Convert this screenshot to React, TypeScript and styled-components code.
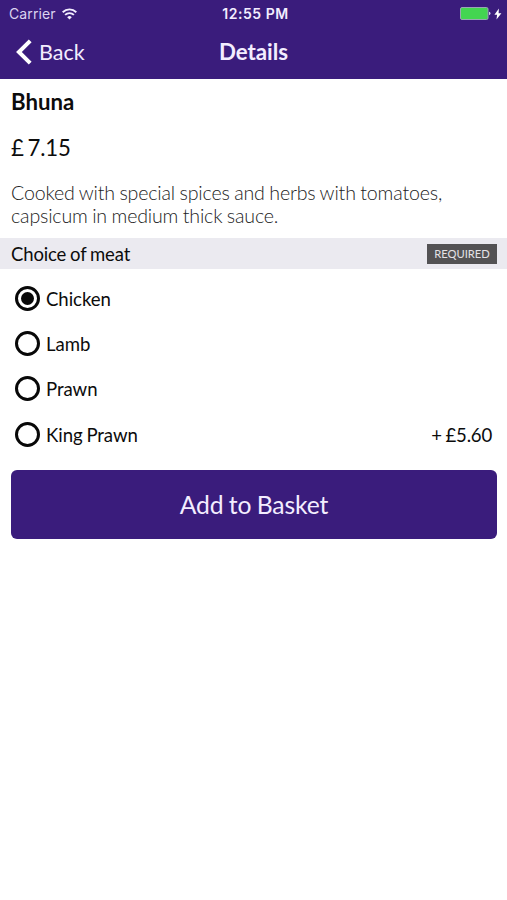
import React, { useState } from "react";
import styled, { createGlobalStyle } from "styled-components";

const purple = "#3a1c7c";

const GlobalStyle = createGlobalStyle`
  * { box-sizing: border-box; }
  body {
    margin: 0;
    background: #fff;
    color: #0c0c0c;
    font-family: Lato, sans-serif;
  }
`;

const Screen = styled.main`
  width: 100%;
  min-height: 900px;
  background: #fff;
`;

const Header = styled.header`
  height: 79px;
  background: ${purple};
  color: #f3edff;
`;

const StatusBar = styled.div`
  display: grid;
  grid-template-columns: 1fr auto 1fr;
  align-items: center;
  height: 27px;
  padding: 0 5px 0 9px;
  font-family: Inter, sans-serif;
  font-size: 14px;
  line-height: 27px;
`;

const Carrier = styled.div`
  display: flex;
  align-items: center;
  gap: 6px;
  color: #dcd3f0;
  letter-spacing: 0.1px;
`;

const Clock = styled.div`
  font-weight: 600;
  font-size: 14px;
  letter-spacing: 0.55px;
`;

const Power = styled.div`
  display: flex;
  align-items: center;
  justify-content: flex-end;
  gap: 3px;
`;

const NavBar = styled.nav`
  display: grid;
  grid-template-columns: 1fr auto 1fr;
  align-items: center;
  height: 50px;
  padding: 0 16px;
`;

const BackButton = styled.button`
  display: flex;
  align-items: center;
  gap: 7px;
  padding: 0;
  border: 0;
  background: none;
  color: inherit;
  font: 400 21.5px/26px Lato, sans-serif;
`;

const Title = styled.h1`
  margin: 0;
  font-size: 22.3px;
  line-height: 26px;
  font-weight: 700;
`;

const Summary = styled.section`
  height: 159px;
  padding: 10px 11px 0;
`;

const Name = styled.h2`
  margin: 0;
  font-size: 22.2px;
  line-height: 26px;
  font-weight: 700;
`;

const Price = styled.p`
  margin: 20px 0 0;
  font-size: 22.2px;
  line-height: 26px;
  word-spacing: -1.8px;
  letter-spacing: -0.15px;
`;

const Description = styled.p`
  margin: 20px 0 0;
  font-size: 19.6px;
  line-height: 23px;
  font-weight: 300;
  color: #222;
  word-spacing: -0.6px;
  letter-spacing: -0.17px;
`;

const GroupHeader = styled.div`
  display: flex;
  align-items: center;
  justify-content: space-between;
  height: 31px;
  padding: 0 10px 0 11px;
  background: #ebeaf0;
  font-size: 18.5px;
  word-spacing: -0.7px;
  letter-spacing: -0.15px;
`;

const Badge = styled.span`
  width: 70px;
  height: 20px;
  background: #535254;
  color: #e4e2e6;
  font-size: 11.2px;
  line-height: 20px;
  letter-spacing: 0;
  text-align: center;
`;

const Options = styled.div`
  display: flex;
  flex-direction: column;
  padding: 7px 15px 0;
`;

const Option = styled.button`
  display: flex;
  align-items: center;
  height: 45.2px;
  padding: 0;
  border: 0;
  background: none;
  color: inherit;
  font: 400 18.6px/22px Lato, sans-serif;
  word-spacing: -0.9px;
  letter-spacing: -0.06px;
`;

const Radio = styled.span<{ $checked: boolean }>`
  display: grid;
  place-items: center;
  width: 25px;
  height: 25px;
  margin-right: 6px;
  border: 3px solid #080808;
  border-radius: 50%;

  &::after {
    content: "";
    width: 13px;
    height: 13px;
    border-radius: 50%;
    background: ${({ $checked }) => ($checked ? "#080808" : "transparent")};
  }
`;

const OptionLabel = styled.span`
  padding-top: 1px;
`;

const Extra = styled(OptionLabel)`
  margin-left: auto;
  letter-spacing: -0.2px;
`;

const AddButton = styled.button`
  display: block;
  width: calc(100% - 21px);
  height: 69px;
  margin: 13px 10px 0 11px;
  padding: 2px 0 0;
  border: 0;
  border-radius: 6px;
  background: ${purple};
  color: #f3edff;
  font: 400 24.7px/30px Lato, sans-serif;
  word-spacing: -0.8px;
  letter-spacing: -0.15px;
`;

const choices = [
  { name: "Chicken" },
  { name: "Lamb" },
  { name: "Prawn" },
  { name: "King Prawn", extra: "+ £5.60" },
];

const WifiIcon = () => (
  <svg width="15" height="12" viewBox="0 0 15 12" fill="none" stroke="#f3edff" strokeWidth="1.9">
    <path d="M.7 4.2a9.7 9.7 0 0 1 13.6 0M3.1 6.9a6.3 6.3 0 0 1 8.8 0" />
    <path d="M7.5 11.5 5.2 9.2a3.3 3.3 0 0 1 4.6 0Z" fill="#f3edff" stroke="none" />
  </svg>
);

const BatteryIcon = () => (
  <svg width="31" height="13" viewBox="0 0 31 13">
    <rect x=".5" y=".5" width="27.5" height="12" rx="1.5" fill="#43d551" stroke="#9aa5b5" />
    <path d="M29 4.8q1.5.3 1.5 1.7T29 8.2Z" fill="#d8cef0" />
  </svg>
);

const BoltIcon = () => (
  <svg width="8" height="12" viewBox="0 0 8 12">
    <path d="M4.9.5.4 6.7h2.7L2.5 11.5 7.4 5.2H4.6Z" fill="#fff" />
  </svg>
);

const BackIcon = () => (
  <svg width="16" height="26" viewBox="0 0 16 26" fill="none" stroke="#fff" strokeWidth="4">
    <path d="M14.2 1.8 2.9 13l11.3 11.2" />
  </svg>
);

export default function App() {
  const [selected, setSelected] = useState("Chicken");
  return (
    <Screen>
      <GlobalStyle />
      <Header>
        <StatusBar>
          <Carrier>Carrier<WifiIcon /></Carrier>
          <Clock>12:55 PM</Clock>
          <Power><BatteryIcon /><BoltIcon /></Power>
        </StatusBar>
        <NavBar>
          <BackButton><BackIcon />Back</BackButton>
          <Title>Details</Title>
        </NavBar>
      </Header>
      <Summary>
        <Name>Bhuna</Name>
        <Price>£ 7.15</Price>
        <Description>
          Cooked with special spices and herbs with tomatoes, capsicum in medium thick sauce.
        </Description>
      </Summary>
      <GroupHeader>
        Choice of meat
        <Badge>REQUIRED</Badge>
      </GroupHeader>
      <Options role="radiogroup">
        {choices.map(({ name, extra }) => (
          <Option
            key={name}
            role="radio"
            aria-checked={selected === name}
            onClick={() => setSelected(name)}
          >
            <Radio $checked={selected === name} />
            <OptionLabel>{name}</OptionLabel>
            {extra && <Extra>{extra}</Extra>}
          </Option>
        ))}
      </Options>
      <AddButton>Add to Basket</AddButton>
    </Screen>
  );
}
